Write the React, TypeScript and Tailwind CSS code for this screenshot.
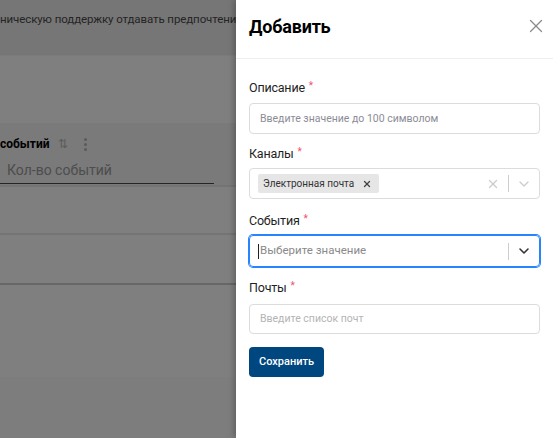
import React from 'react';
import { X, ChevronDown } from 'lucide-react';

const font = { fontFamily: 'Roboto, "Noto Sans", sans-serif' };

const Label: React.FC<{ text: string }> = ({ text }) => (
    <div className="flex items-start h-4 text-[12.5px] leading-4 tracking-[-0.2px] text-[#1f1f1f]">
        {text}
        <span className="ml-[4px] text-[10px] leading-3 text-[#f0506e]">*</span>
    </div>
);

const Background: React.FC = () => (
    <div className="flex flex-col w-full h-full bg-white">
        <div className="h-[55px] shrink-0 bg-[#ececec] overflow-hidden whitespace-nowrap pt-[11px] text-[11.5px] tracking-[-0.1px] text-[#4a4a4a]">
            ническую поддержку отдавать предпочтени
        </div>
        <div className="h-[68px] shrink-0 bg-white border-t border-[#f6f6f6]" />
        <div className="h-[62px] shrink-0 bg-[#f4f4f4] pr-[22px] flex flex-col">
            <div className="flex items-center gap-2 h-[40px] pt-[2px]">
                <span className="text-[12px] font-bold text-black">событий</span>
                <span className="text-[12px] text-[#b5b5b5]">⇅</span>
                <span className="ml-2 flex flex-col gap-[2px]">
                    <span className="w-[3px] h-[3px] rounded-full bg-[#b5b5b5]" />
                    <span className="w-[3px] h-[3px] rounded-full bg-[#b5b5b5]" />
                    <span className="w-[3px] h-[3px] rounded-full bg-[#b5b5b5]" />
                </span>
            </div>
            <div className="flex items-center h-[14px] text-[14px] text-[#9a9a9a] border-b border-[#4b4b4b] pb-[6px] box-content whitespace-pre">
                <span className="w-[7px] shrink-0" />
                <span>Кол-во событий</span>
            </div>
        </div>
        <div className="h-[48px] shrink-0 border-t-2 border-[#e9e9e9]" />
        <div className="h-[50px] shrink-0 border-t-2 border-[#e9e9e9]" />
        <div className="h-[46px] shrink-0 border-t-2 border-[#cfcfcf]" />
        <div className="h-[48px] shrink-0 bg-white" />
        <div className="flex-1 bg-[#fafafa]" />
    </div>
);

const App: React.FC = () => {
    return (
        <div className="relative w-[553px] h-[438px] overflow-hidden flex" style={font}>
            <div className="w-[236px] h-full shrink-0 overflow-hidden">
                <Background />
            </div>
            <div className="absolute inset-0 bg-black/50" />
            <div className="absolute top-0 right-0 bottom-0 w-[317px] bg-white shadow-[-2px_0_6px_rgba(0,0,0,0.25)] flex flex-col">
                <div className="h-[59px] shrink-0 flex items-center justify-between pl-[13px] pr-[6px] border-b border-[#eeeeee]">
                    <h1 className="text-[18px] font-bold text-black tracking-[-0.2px] pb-[6px]">Добавить</h1>
                    <X className="w-[22px] h-[22px] text-[#8a8a8a] mb-[6px]" strokeWidth={1.3} />
                </div>
                <div className="px-[13px] pt-[21px] flex flex-col">
                    <Label text="Описание" />
                    <div className="mt-[7px] h-[31px] border border-[#dcdcdc] rounded-[4px] flex items-center px-[10px] text-[10.5px] text-[#8c8c96]">
                        Введите значение до 100 символом
                    </div>

                    <div className="mt-[12px]">
                        <Label text="Каналы" />
                    </div>
                    <div className="mt-[6px] h-[31px] border border-[#dcdcdc] rounded-[4px] flex items-center pl-[8px]">
                        <div className="flex-1 flex">
                            <div className="h-[19px] bg-[#e6e6e6] rounded-[2px] flex items-center pl-[5px] pr-[7px] text-[10px] text-[#333]">
                                Электронная почта
                                <X className="ml-[8px] w-[10px] h-[10px] text-[#444]" strokeWidth={3} />
                            </div>
                        </div>
                        <X className="w-[14px] h-[14px] text-[#cccccc] mr-[8px]" strokeWidth={2.2} />
                        <span className="w-px h-[17px] bg-[#cccccc]" />
                        <ChevronDown className="w-[16px] h-[16px] text-[#cccccc] mx-[7px]" strokeWidth={2} />
                    </div>

                    <div className="mt-[14px]">
                        <Label text="События" />
                    </div>
                    <div className="mt-[6px] h-[32px] border border-[#2684ff] rounded-[4px] shadow-[0_0_0_1px_#2684ff] flex items-center pl-[8px]">
                        <div className="flex-1 flex items-center text-[11.5px] text-[#8a8a8a]">
                            <span className="w-px h-[15px] bg-[#222] mr-[1px]" />
                            Выберите значение
                        </div>
                        <span className="w-px h-[17px] bg-[#cccccc]" />
                        <ChevronDown className="w-[16px] h-[16px] text-[#333] mx-[7px]" strokeWidth={2.4} />
                    </div>

                    <div className="mt-[13px]">
                        <Label text="Почты" />
                    </div>
                    <div className="mt-[8px] h-[30px] border border-[#dcdcdc] rounded-[4px] flex items-center px-[10px] text-[10.5px] text-[#b4b4b4]">
                        Введите список почт
                    </div>

                    <div className="mt-[13px]">
                        <button className="h-[30px] px-[10px] rounded-[4px] bg-[#00467f] text-white text-[11px] font-medium">
                            Сохранить
                        </button>
                    </div>
                </div>
            </div>
        </div>
    );
};

export default App;
